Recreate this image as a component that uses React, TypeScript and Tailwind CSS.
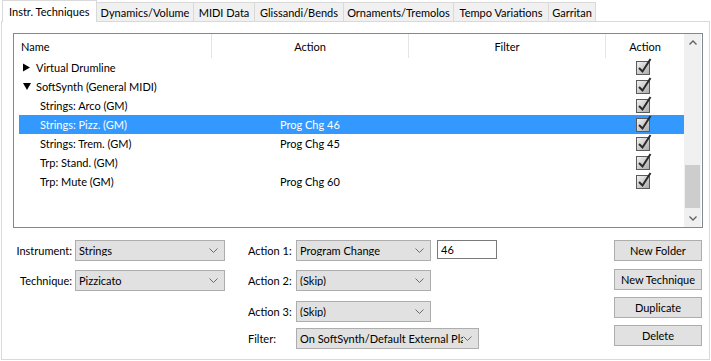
import React from "react";

interface Row {
  name: string;
  action?: string;
  level: number;
  toggle?: "open" | "closed";
  selected?: boolean;
}

const rows: Row[] = [
  { name: "Virtual Drumline", level: 0, toggle: "closed" },
  { name: "SoftSynth (General MIDI)", level: 0, toggle: "open" },
  { name: "Strings: Arco (GM)", level: 1 },
  { name: "Strings: Pizz. (GM)", action: "Prog Chg 46", level: 1, selected: true },
  { name: "Strings: Trem. (GM)", action: "Prog Chg 45", level: 1 },
  { name: "Trp: Stand. (GM)", level: 1 },
  { name: "Trp: Mute (GM)", action: "Prog Chg 60", level: 1 },
];

const tabs = [
  "Instr. Techniques",
  "Dynamics/Volume",
  "MIDI Data",
  "Glissandi/Bends",
  "Ornaments/Tremolos",
  "Tempo Variations",
  "Garritan",
];

const tabWidths = ["w-[95px]", "w-[97px]", "w-[61px]", "w-[89px]", "w-[110px]", "w-[95px]", "w-[47px]"];

const CheckIcon = () => (
  <svg width="16" height="17" viewBox="0 0 16 17">
    <defs>
      <linearGradient id="cbg" x1="0" y1="0" x2="1" y2="1">
        <stop offset="0" stopColor="#f4f4f4" />
        <stop offset="1" stopColor="#a9a9a9" />
      </linearGradient>
    </defs>
    <rect x="0.5" y="3.5" width="13" height="13" fill="url(#cbg)" stroke="#5a5a5a" />
    <path d="M3 10 L6.5 13.5 L14.5 1" fill="none" stroke="#2a2a2a" strokeWidth="2" />
  </svg>
);

const Chevron = () => (
  <svg width="9" height="6" viewBox="0 0 9 6" className="shrink-0">
    <path d="M0.5 0.5 L4.5 4.5 L8.5 0.5" fill="none" stroke="#6b6b6b" strokeWidth="1" />
  </svg>
);

const Combo = ({ value, width }: { value: string; width: string }) => (
  <div
    className={`${width} h-[21px] shrink-0 flex items-center bg-[#e1e1e1] border border-[#adadad] pl-[3px] pr-[6px] overflow-hidden`}
  >
    <span className="flex-1 whitespace-nowrap overflow-hidden">{value}</span>
    <Chevron />
  </div>
);

const Button = ({ label }: { label: string }) => (
  <div className="w-[88px] h-[21px] flex items-center justify-center whitespace-nowrap bg-[#e1e1e1] border border-[#adadad]">
    {label}
  </div>
);

export default function App() {
  return (
    <div className="w-[711px] h-[361px] bg-white text-[11px] leading-none text-black font-['Lato','Noto_Sans',sans-serif] overflow-hidden">
      {/* tab strip */}
      <div className="flex items-end h-[21px] pl-[2px]">
        {tabs.map((t, i) =>
          i === 0 ? (
            <div
              key={t}
              className={`${tabWidths[i]} h-[22px] -mb-[1px] relative z-10 bg-white border-l border-r border-t border-[#d9d9d9] flex items-start pt-[5px] pl-[6px] whitespace-nowrap`}
            >
              {t}
            </div>
          ) : (
            <div
              key={t}
              className={`${tabWidths[i]} h-[19px] bg-[#f0f0f0] border-t border-r border-[#d9d9d9] flex items-center justify-center whitespace-nowrap`}
            >
              {t}
            </div>
          )
        )}
      </div>

      {/* panel */}
      <div className="ml-[1px] w-[709px] h-[339px] border border-[#d9d9d9] bg-white pt-[11px] pl-[11px]">
        {/* list view */}
        <div className="w-[690px] h-[195px] border border-[#828790] flex">
          <div className="flex-1 flex flex-col">
            <div className="h-[24px] flex items-center">
              <div className="w-[198px] h-full pl-[7px] flex items-center border-r border-[#e5e5e5]">Name</div>
              <div className="w-[197px] h-full flex items-center justify-center border-r border-[#e5e5e5]">Action</div>
              <div className="w-[197px] h-full flex items-center justify-center border-r border-[#e5e5e5]">Filter</div>
              <div className="flex-1 h-full flex items-center justify-center">Action</div>
            </div>
            {rows.map((r) => (
              <div
                key={r.name}
                className={`h-[19px] ml-[5px] flex items-center ${r.selected ? "bg-[#3399ff] text-white" : ""}`}
              >
                <div className={`w-[193px] flex items-center ${r.level === 0 ? "pl-[4px]" : "pl-[21px]"}`}>
                  {r.toggle === "closed" && (
                    <svg width="13" height="9" viewBox="0 0 13 9" className="shrink-0">
                      <path d="M0 0.5 L7 4.5 L0 8.5 Z" fill="#000" />
                    </svg>
                  )}
                  {r.toggle === "open" && (
                    <svg width="13" height="9" viewBox="0 0 13 9" className="shrink-0">
                      <path d="M0 1 L8 1 L4 8 Z" fill="#000" />
                    </svg>
                  )}
                  <span className="whitespace-nowrap">{r.name}</span>
                </div>
                <div className="w-[197px] pl-[68px] whitespace-nowrap">{r.action ?? ""}</div>
                <div className="w-[197px]" />
                <div className="flex-1 flex justify-center -mt-[3px] pr-[2px]">
                  <CheckIcon />
                </div>
              </div>
            ))}
          </div>
          {/* scrollbar */}
          <div className="w-[17px] mr-[1px] bg-[#f0f0f0] flex flex-col items-center">
            <div className="h-[17px] flex items-center justify-center">
              <svg width="8" height="5" viewBox="0 0 8 5">
                <path d="M0.5 4.5 L4 1 L7.5 4.5" fill="none" stroke="#606060" strokeWidth="1.3" />
              </svg>
            </div>
            <div className="flex-1 w-full flex flex-col">
              <div className="h-[114px]" />
              <div className="h-[43px] w-[15px] mx-auto bg-[#cdcdcd]" />
            </div>
            <div className="h-[17px] flex items-center justify-center">
              <svg width="8" height="5" viewBox="0 0 8 5">
                <path d="M0.5 0.5 L4 4 L7.5 0.5" fill="none" stroke="#606060" strokeWidth="1.3" />
              </svg>
            </div>
          </div>
        </div>

        {/* controls */}
        <div className="flex mt-[12px]">
          <div className="flex flex-col w-[224px] shrink-0">
            <div className="flex items-center h-[21px]">
              <span className="w-[62px] text-right pr-[3px] whitespace-nowrap">Instrument:</span>
              <Combo value="Strings" width="w-[150px]" />
            </div>
            <div className="flex items-center h-[21px] mt-[9px]">
              <span className="w-[62px] text-right pr-[3px] whitespace-nowrap">Technique:</span>
              <Combo value="Pizzicato" width="w-[150px]" />
            </div>
          </div>
          <div className="flex flex-col ml-[11px] w-[300px] shrink-0">
            <div className="flex items-center h-[21px]">
              <span className="w-[48px] whitespace-nowrap">Action 1:</span>
              <Combo value="Program Change" width="w-[135px]" />
              <div className="ml-[6px] w-[60px] h-[19px] self-start border border-[#7a7a7a] bg-white pl-[3px] pt-[3px]">46</div>
            </div>
            <div className="flex items-center h-[21px] mt-[9px]">
              <span className="w-[48px] whitespace-nowrap">Action 2:</span>
              <Combo value="(Skip)" width="w-[135px]" />
            </div>
            <div className="flex items-center h-[21px] mt-[10px]">
              <span className="w-[48px] whitespace-nowrap">Action 3:</span>
              <Combo value="(Skip)" width="w-[135px]" />
            </div>
            <div className="flex items-center h-[21px] mt-[6px]">
              <span className="w-[48px] whitespace-nowrap">Filter:</span>
              <Combo value="On SoftSynth/Default External Pla" width="w-[183px]" />
            </div>
          </div>
          <div className="flex flex-col ml-[66px] gap-[8px] shrink-0">
            <Button label="New Folder" />
            <Button label="New Technique" />
            <div className="-mt-[1px]">
              <Button label="Duplicate" />
            </div>
            <div className="-mt-[1px]">
              <Button label="Delete" />
            </div>
          </div>
        </div>
      </div>
    </div>
  );
}
